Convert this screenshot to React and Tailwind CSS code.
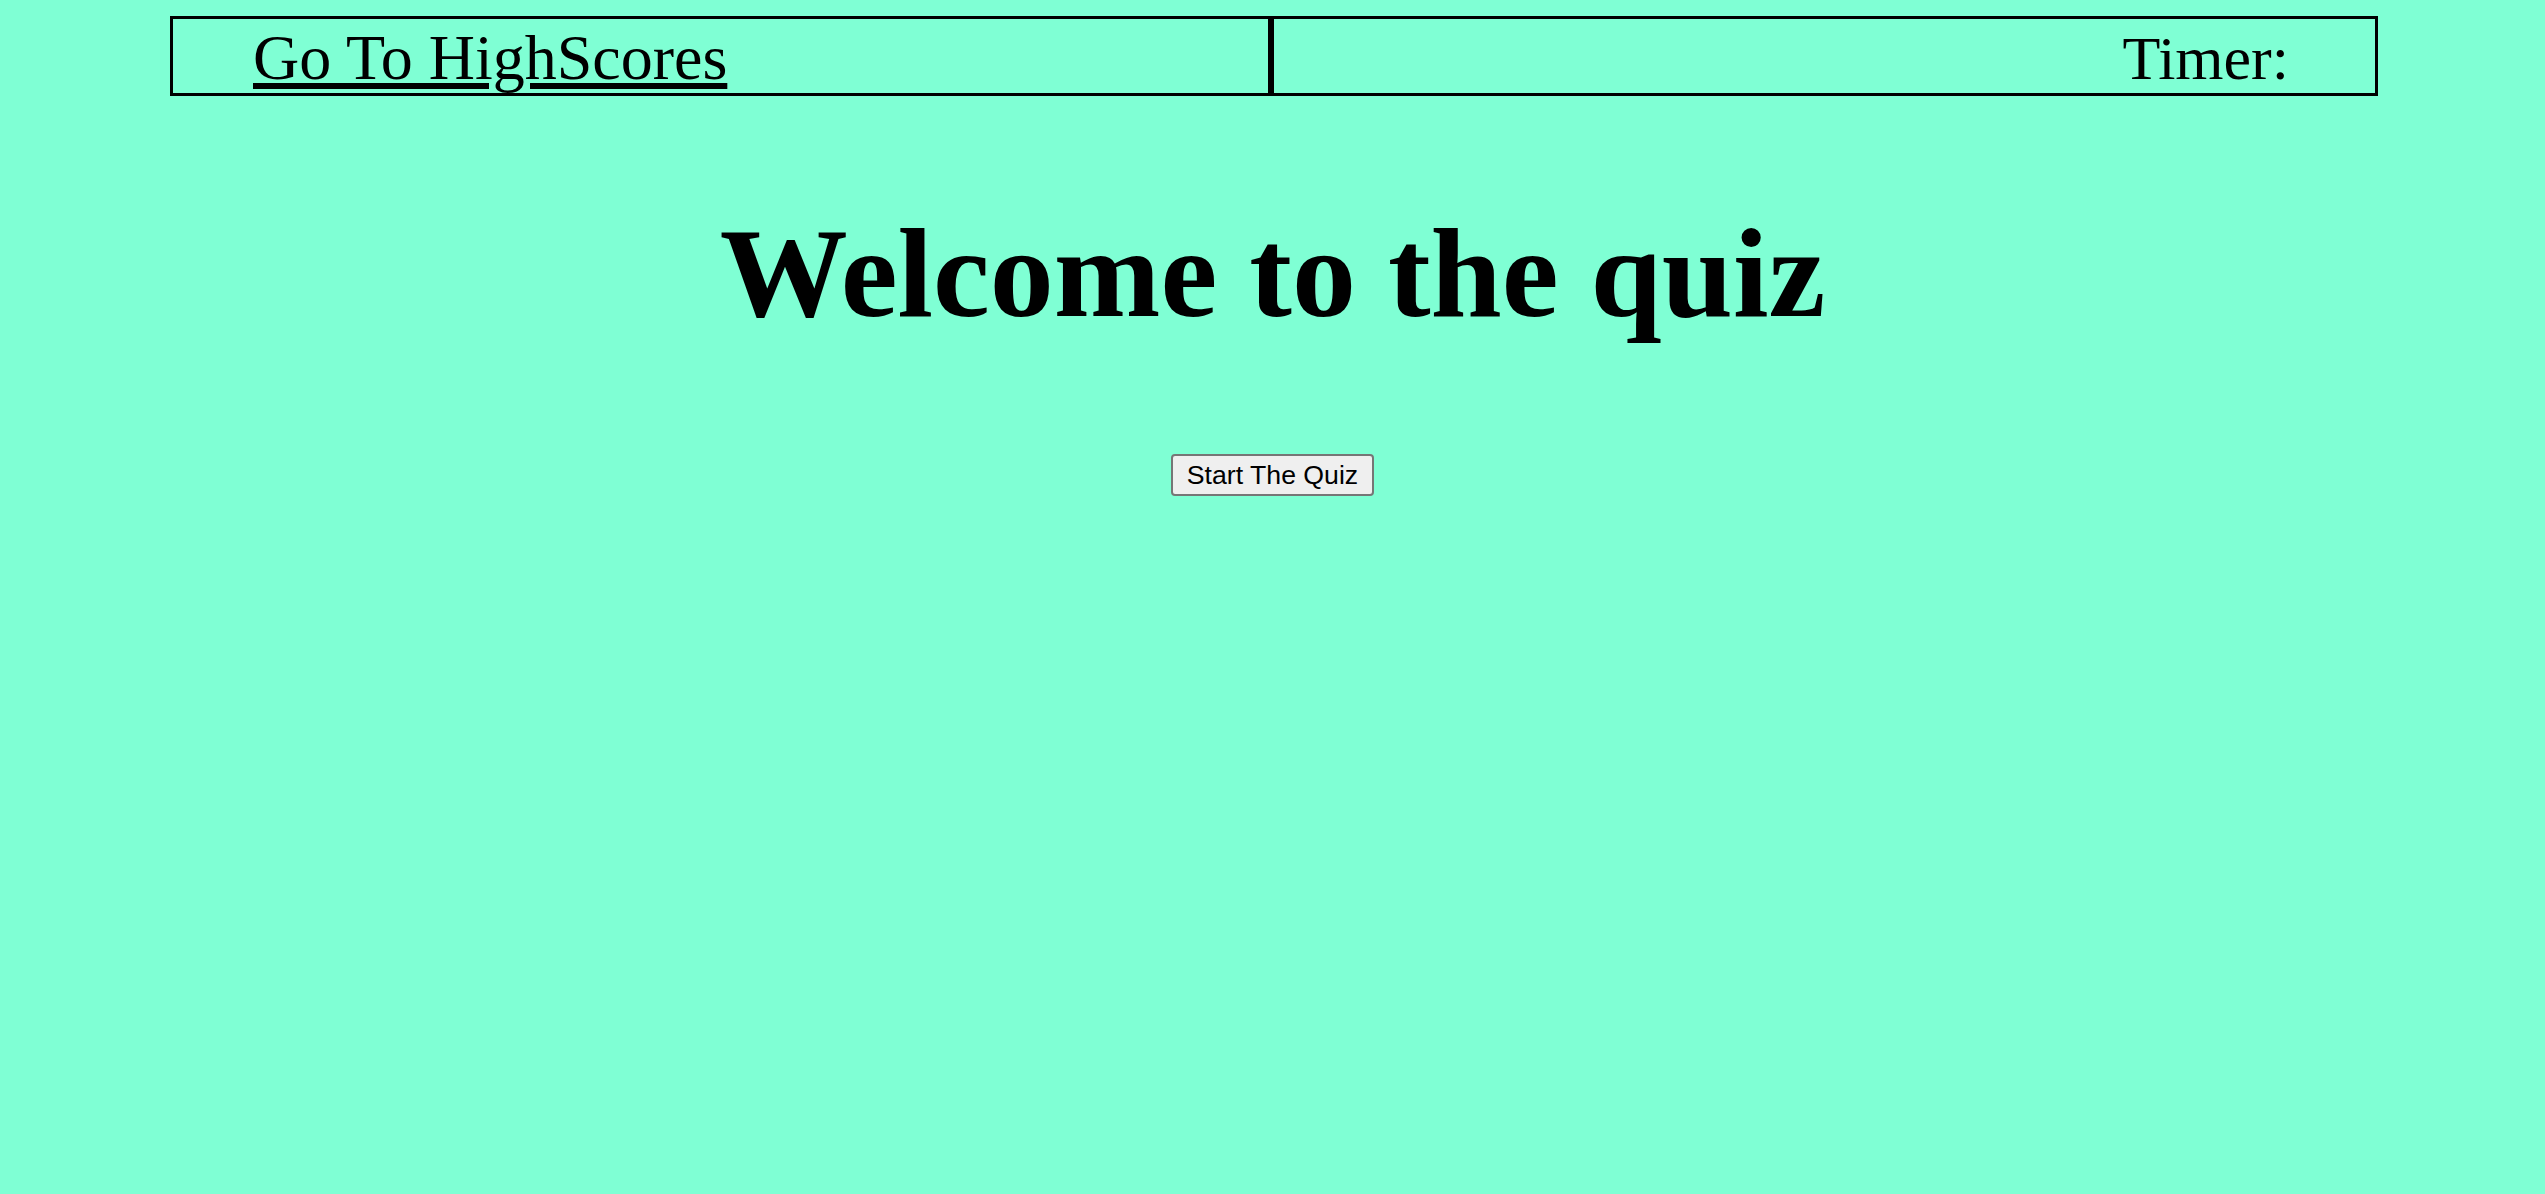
export default function App() {
  return (
    <div className="min-h-screen bg-[#7fffd4] p-4 text-black" style={{ fontFamily: '"Liberation Serif", "Times New Roman", serif' }}>
      {/* Top bar */}
      <div className="ml-[154px] flex w-[2208px] h-[80px]">
        <div className="flex-1 border-[3px] border-black flex items-center pl-[80px] pt-[4px]">
          <a href="#" className="text-[64px] leading-none underline text-black">
            Go To HighScores
          </a>
        </div>
        <div className="flex-1 border-[3px] border-black flex items-center justify-end pr-[86px] pt-[4px]">
          <span className="text-[62px] leading-none">Timer:</span>
        </div>
      </div>

      {/* Title */}
      <h1 className="mt-[104px] text-center text-[128px] font-bold leading-[147px]">
        Welcome to the quiz
      </h1>

      {/* Start button */}
      <div className="mt-[107px] flex justify-center">
        <button
          className="h-[42px] px-[14px] rounded-[4px] border-2 border-[#767676] bg-[#efefef] text-[26.67px] leading-none text-black"
          style={{ fontFamily: '"Liberation Sans", Arial, sans-serif' }}
        >
          Start The Quiz
        </button>
      </div>
    </div>
  );
}
